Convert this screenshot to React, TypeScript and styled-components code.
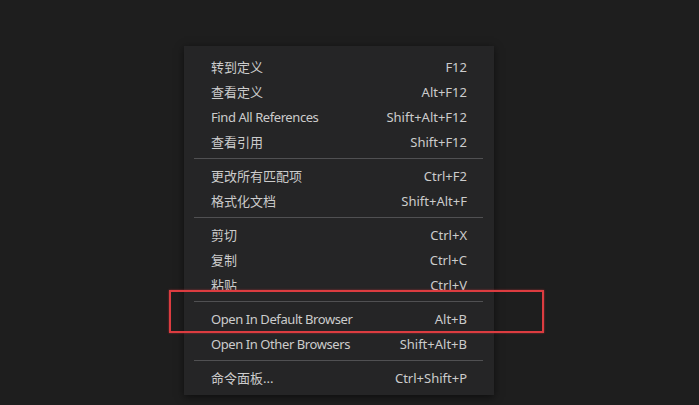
import React from "react";
import styled, { createGlobalStyle } from "styled-components";

const GlobalStyle = createGlobalStyle`
  html, body {
    margin: 0;
    padding: 0;
    background: #1e1e1e;
    width: 699px;
    height: 405px;
    overflow: hidden;
  }
  * { box-sizing: border-box; }
`;

const Page = styled.div`
  width: 699px;
  height: 405px;
  background: #1e1e1e;
  padding: 46px 0 0 184px;
  font-family: "Noto Sans", "Noto Sans CJK SC", sans-serif;
`;

const Menu = styled.div`
  position: relative;
  width: 310px;
  background: #252526;
  padding: 8px 0 5px;
  box-shadow: 0 2px 8px rgba(0, 0, 0, 0.55);
  display: flex;
  flex-direction: column;
`;

const Row = styled.div`
  height: 25px;
  display: flex;
  align-items: center;
  justify-content: space-between;
  padding: 0 27px;
  font-size: 13px;
  color: #cccccc;
  white-space: nowrap;
`;

const Label = styled.span<{ $latin?: boolean }>`
  letter-spacing: ${(p) => (p.$latin ? "-0.42px" : "0")};
`;

const Key = styled.span`
  color: #cccccc;
`;

const Separator = styled.div`
  height: 1px;
  margin: 4px 11px 4px 10px;
  background: #505052;
`;

const Highlight = styled.div`
  position: absolute;
  left: -15px;
  top: 244px;
  width: 375px;
  height: 43px;
  border: 2px solid #dc3c40;
  box-shadow: 0 0 2px rgba(220, 60, 64, 0.6);
  pointer-events: none;
`;

type Item = { label: string; key: string } | "sep";

const items: Item[] = [
  { label: "转到定义", key: "F12" },
  { label: "查看定义", key: "Alt+F12" },
  { label: "Find All References", key: "Shift+Alt+F12" },
  { label: "查看引用", key: "Shift+F12" },
  "sep",
  { label: "更改所有匹配项", key: "Ctrl+F2" },
  { label: "格式化文档", key: "Shift+Alt+F" },
  "sep",
  { label: "剪切", key: "Ctrl+X" },
  { label: "复制", key: "Ctrl+C" },
  { label: "粘贴", key: "Ctrl+V" },
  "sep",
  { label: "Open In Default Browser", key: "Alt+B" },
  { label: "Open In Other Browsers", key: "Shift+Alt+B" },
  "sep",
  { label: "命令面板...", key: "Ctrl+Shift+P" },
];

const isLatin = (s: string) => /^[\x20-\x7e]+$/.test(s);

export default function App() {
  return (
    <>
      <GlobalStyle />
      <Page>
        <Menu>
          {items.map((it, i) =>
            it === "sep" ? (
              <Separator key={i} />
            ) : (
              <Row key={i}>
                <Label $latin={isLatin(it.label)}>{it.label}</Label>
                <Key>{it.key}</Key>
              </Row>
            )
          )}
          <Highlight />
        </Menu>
      </Page>
    </>
  );
}
